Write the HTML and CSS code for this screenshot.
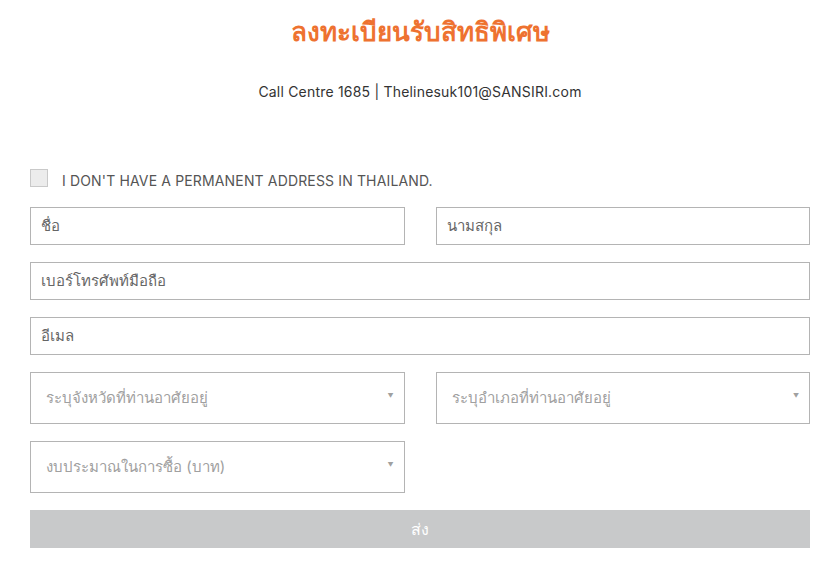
FILE: index.html
```html
<!DOCTYPE html>
<html lang="th">
<head>
<meta charset="utf-8">
<link rel="stylesheet" href="styles.css">
</head>
<body>
<div class="page">
  <h1 class="title">ลงทะเบียนรับสิทธิพิเศษ</h1>
  <p class="contact">Call Centre 1685 | Thelinesuk101@SANSIRI.com</p>
  <form class="form">
    <label class="check">
      <span class="box"></span>
      <span class="check-label">I DON'T HAVE A PERMANENT ADDRESS IN THAILAND.</span>
    </label>
    <div class="row two">
      <div class="field">ชื่อ</div>
      <div class="field">นามสกุล</div>
    </div>
    <div class="row">
      <div class="field">เบอร์โทรศัพท์มือถือ</div>
    </div>
    <div class="row">
      <div class="field">อีเมล</div>
    </div>
    <div class="row two">
      <div class="select"><span>ระบุจังหวัดที่ท่านอาศัยอยู่</span><span class="arrow">▼</span></div>
      <div class="select"><span>ระบุอำเภอที่ท่านอาศัยอยู่</span><span class="arrow">▼</span></div>
    </div>
    <div class="row two">
      <div class="select"><span>งบประมาณในการซื้อ (บาท)</span><span class="arrow">▼</span></div>
    </div>
    <div class="submit">ส่ง</div>
  </form>
</div>
</body>
</html>
```
FILE: styles.css
```css
*, *::before, *::after {
  box-sizing: border-box;
}
html, body {
  margin: 0;
  padding: 0;
  background: #fff;
}
body {
  font-family: "Inter", "Noto Sans", "Liberation Sans", sans-serif;
  color: #333;
}
.page {
  padding: 0 30px;
}
.title {
  margin: 0;
  padding-top: 14px;
  height: 50px;
  line-height: 36px;
  text-align: center;
  font-size: 26px;
  font-weight: 700;
  color: #ee7230;
}
.contact {
  margin: 0;
  padding-top: 32px;
  line-height: 20px;
  text-align: center;
  font-size: 14px;
  letter-spacing: 0.2px;
  color: #333;
}
.form {
  display: flex;
  flex-direction: column;
  gap: 17px;
  padding-top: 66px;
}
.check {
  display: flex;
  align-items: center;
  gap: 14px;
  height: 20px;
  margin-bottom: 2px;
}
.box {
  width: 18px;
  height: 18px;
  border: 1px solid #c9c9c9;
  background: #ececec;
}
.check-label {
  font-size: 14px;
  letter-spacing: 0.15px;
  color: #555;
  padding-top: 4px;
}
.row {
  display: flex;
}
.row.two {
  display: grid;
  grid-template-columns: 1fr 1fr;
  column-gap: 31px;
}
.field {
  flex: 1;
  height: 38px;
  border: 1px solid #b4b4b4;
  padding: 0 10px;
  display: flex;
  align-items: center;
  font-size: 15px;
  color: #666;
}
.select {
  height: 52px;
  min-width: 0;
  border: 1px solid #b4b4b4;
  padding: 0 10px 0 15px;
  display: flex;
  align-items: center;
  justify-content: space-between;
  font-size: 15px;
  color: #a0a0a0;
}
.arrow {
  font-size: 6px;
  color: #a0a0a0;
  margin-bottom: 6px;
}
.submit {
  height: 38px;
  background: #c8c9ca;
  color: #fff;
  display: flex;
  align-items: center;
  justify-content: center;
  font-size: 16px;
}
```
